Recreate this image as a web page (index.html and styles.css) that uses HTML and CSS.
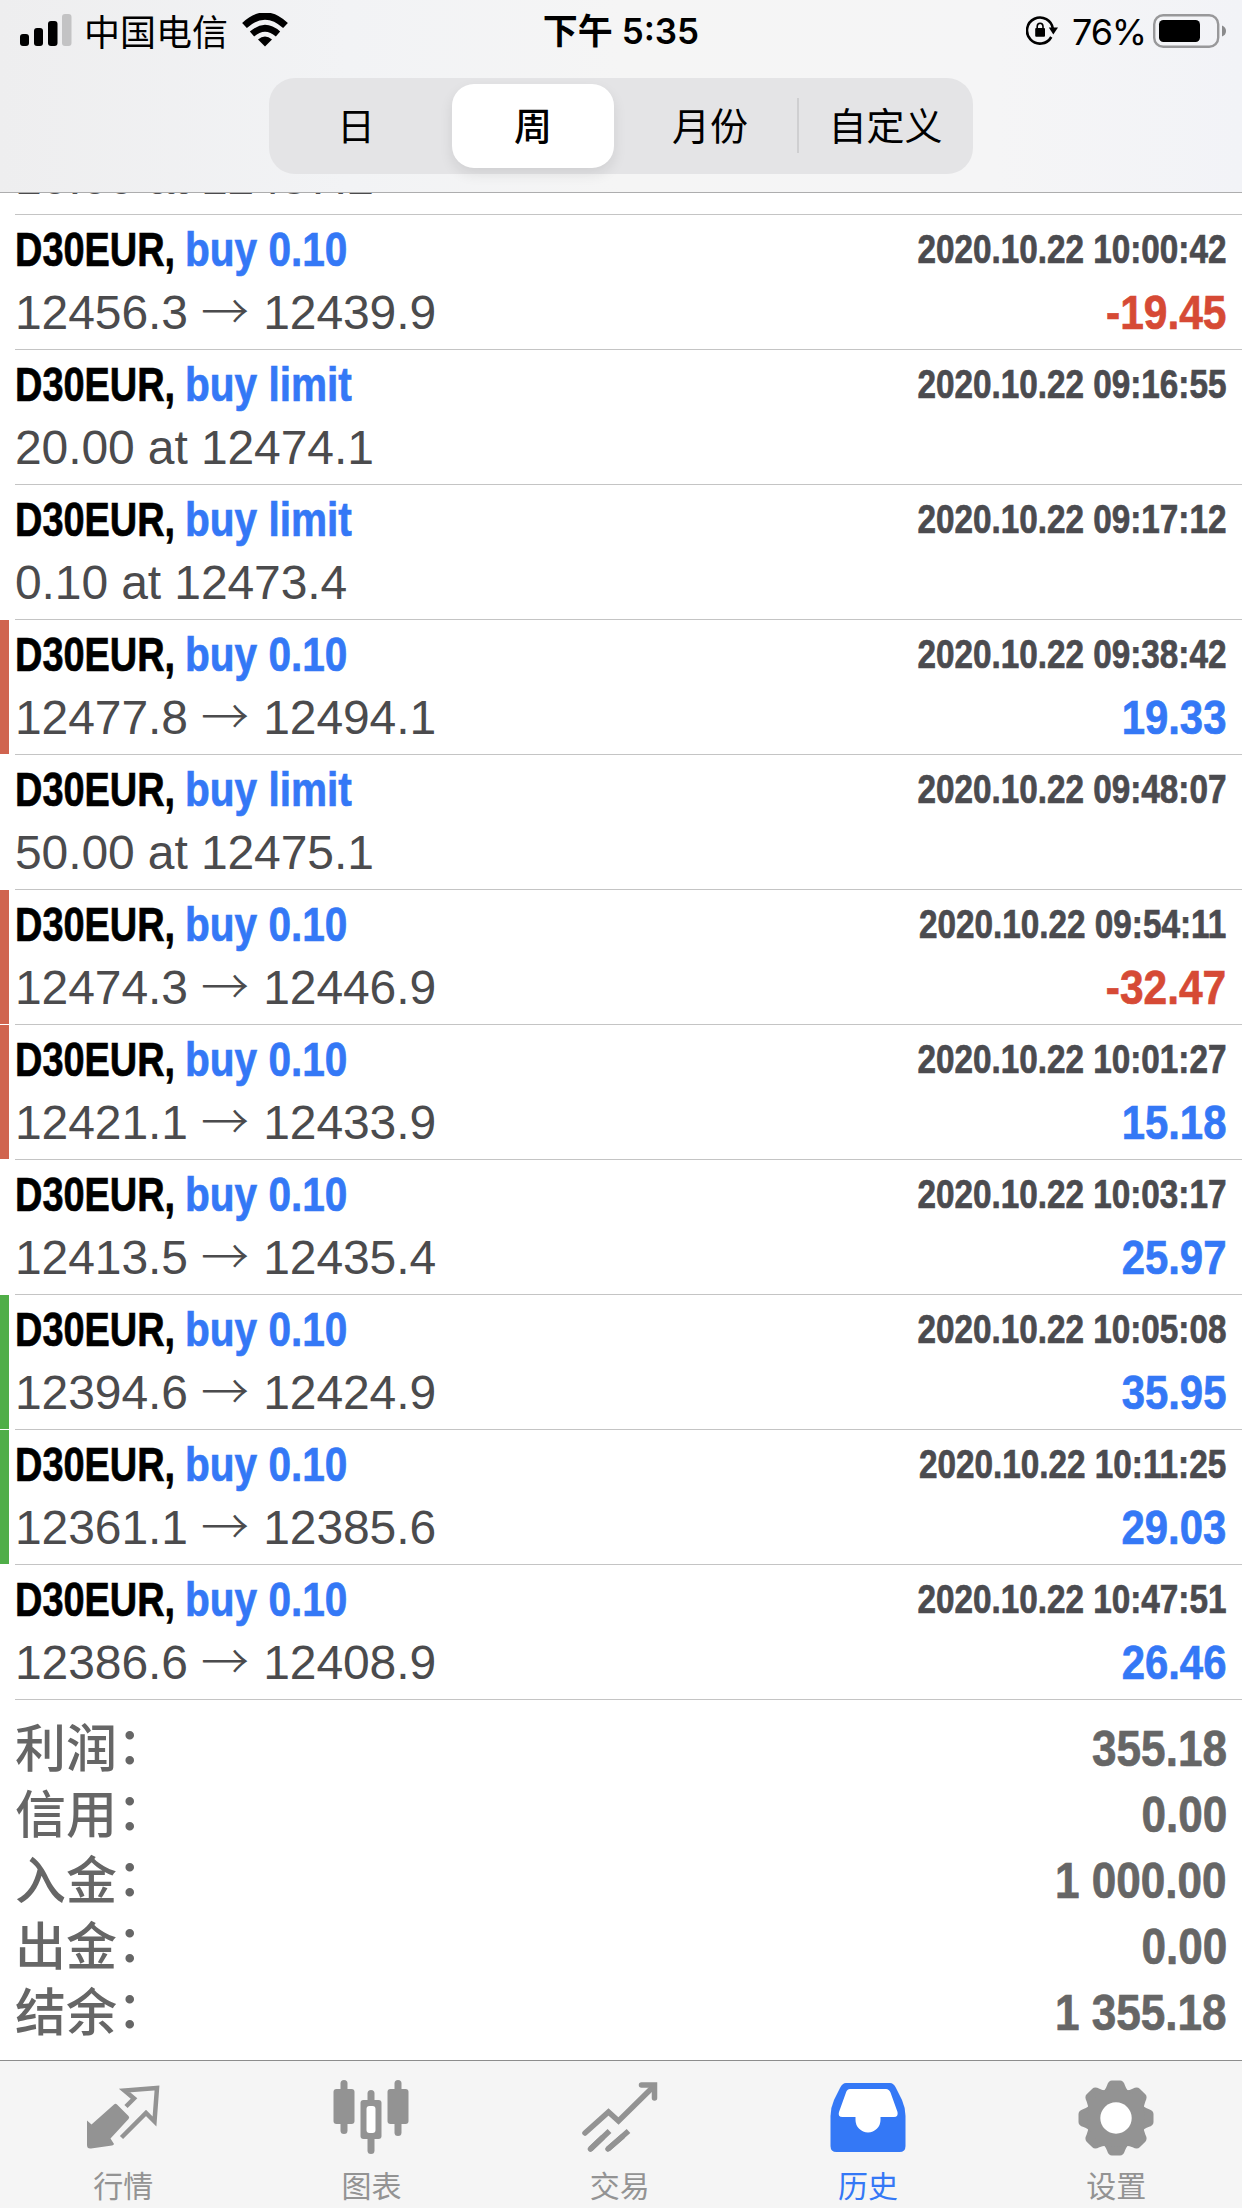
FILE: index.html
```
<!DOCTYPE html>
<html lang="zh-CN">
<head>
  <meta charset="UTF-8" />
  <meta name="viewport" content="width=device-width, initial-scale=1.0"/>
  <title>历史</title>
  <link rel="stylesheet" href="styles.css">
</head>
<body>
  <div class="app">
    <header class="header">
      <div class="status">
        <div class="status-left">
          <svg class="signal" width="52" height="34" viewBox="0 0 52 34">
            <rect x="0" y="20" width="9" height="12" rx="3"/>
            <rect x="14" y="14" width="9" height="18" rx="3"/>
            <rect x="28" y="7" width="9.5" height="25" rx="3"/>
            <rect x="42" y="0" width="9.5" height="32" rx="3" fill="#c3c3c4"/>
          </svg>
          <span class="carrier">中国电信</span>
          <svg class="wifi" width="46" height="34" viewBox="0 0 46 34">
            <path d="M2.5 12.5Q23-6.500 43.500 12.500" fill="none" stroke="#000" stroke-width="7"/>
            <path d="M10 21Q23 9.500 36 21" fill="none" stroke="#000" stroke-width="6.500"/>
            <path d="M16 26.500Q23 20.500 30 26.500L23 33.500Z"/>
          </svg>
        </div>
        <div class="time">下午 5:35</div>
        <div class="status-right">
          <svg class="lock" width="32" height="32" viewBox="0 0 32 32">
            <path d="M25.300 22A13 13 0 1 1 26.900 14" fill="none" stroke="#000" stroke-width="2.600"/>
            <path d="M22.800 12.500H32L27.300 19.500Z"/>
            <rect x="9.200" y="13" width="9.800" height="8.800" rx="1"/>
            <path d="M11.200 13.500V11.500a2.900 3.300 0 0 1 5.800 0v2" fill="none" stroke="#000" stroke-width="1.600"/>
          </svg>
          <span class="percent">76%</span>
          <svg class="battery" width="74" height="34" viewBox="0 0 74 34">
            <rect x="1.200" y="1.200" width="64" height="31.600" rx="9" fill="none" stroke="#98989a" stroke-width="2.400"/>
            <rect x="6" y="6" width="41" height="22" rx="4.500"/>
            <path d="M69 11.500Q73 13 73 17T69 22.500Z" fill="#8a8a8c"/>
          </svg>
        </div>
      </div>
      <nav class="segments">
        <span class="segment">日</span>
        <span class="segment active">周</span>
        <span class="segment">月份</span>
        <span class="segment last">自定义</span>
      </nav>
    </header>

    <main class="content">
      <div class="clipped"><span class="prices">10.00 at 12437.2</span></div>
      <div id="deals"></div>

      <section class="summary">
        <div class="total"><span class="label">利润<span class="colon">：</span></span><span class="sum">355.18</span></div>
        <div class="total"><span class="label">信用<span class="colon">：</span></span><span class="sum">0.00</span></div>
        <div class="total"><span class="label">入金<span class="colon">：</span></span><span class="sum">1 000.00</span></div>
        <div class="total"><span class="label">出金<span class="colon">：</span></span><span class="sum">0.00</span></div>
        <div class="total"><span class="label">结余<span class="colon">：</span></span><span class="sum">1 355.18</span></div>
      </section>
    </main>

    <footer class="tabbar">
      <div class="tab">
        <svg width="76" height="76" viewBox="0 0 76 76">
          <path d="M2 40.500L6.500 44.500L29 24.500Q30.500 23 32 24.500L43.500 36Q45 37.500 43.500 39L25.500 58.500L29 64Q28.500 65 27 65.500L6 68.500Q2 69 2 65Z"/>
          <path d="M41 26.500L49 18.500L39.500 10.500L72 8L69.500 41.500L61 33L36.500 57.500" fill="none" stroke="#939393" stroke-width="4.500" stroke-linejoin="miter"/>
        </svg>
        <span>行情</span>
      </div>
      <div class="tab">
        <svg width="76" height="76" viewBox="0 0 76 76">
          <rect x="7.500" y="0" width="7" height="54" rx="3.500"/>
          <rect x="0.500" y="9" width="21" height="35" rx="3"/>
          <rect x="61.500" y="0" width="7" height="56" rx="3.500"/>
          <rect x="54.500" y="9" width="21" height="35" rx="3"/>
          <rect x="34.500" y="10" width="7" height="64" rx="3.500"/>
          <rect x="27.500" y="20" width="21" height="39" rx="3"/>
          <rect x="33.500" y="26" width="9" height="27" rx="3" fill="#fff"/>
        </svg>
        <span>图表</span>
      </div>
      <div class="tab">
        <svg width="76" height="76" viewBox="0 0 76 76">
          <g fill="none" stroke="#939393" stroke-width="5.500" stroke-linecap="round">
            <path d="M3 53L26.500 32L36.500 41L70 8"/>
            <path d="M59.500 5H72.500V18"/>
            <path d="M8.500 69L27.500 51M26 69L46.500 51" stroke-linecap="butt"/>
            <path d="M8.500 69L20 58M26 69L40 57"/>
          </g>
        </svg>
        <span>交易</span>
      </div>
      <div class="tab active">
        <svg width="76" height="76" viewBox="0 0 76 76">
          <path d="M16 3H60Q63.500 3 66 8L72 20Q75.500 28 75.500 36V66Q75.500 72 69.500 72H6.500Q0.500 72 0.500 66V36Q0.500 28 4 20L10 8Q12.500 3 16 3Z"/>
          <path d="M20 9H56Q59 9 60.500 12.500L67.500 32Q68.500 37 64 37H50.500V40A12.500 12.500 0 0 1 25.500 40V37H12.500Q7.500 37 9 32L16 12.500Q17 9 20 9Z" fill="#fff"/>
        </svg>
        <span>历史</span>
      </div>
      <div class="tab">
        <svg width="76" height="76" viewBox="0 0 76 76">
          <g id="teeth">
            <path id="tooth" d="M23 13Q27.300 10.500 29 5.500Q30.500 0.500 34 0.500H42Q45.500 0.500 47 5.500Q48.700 10.500 53 13Z"/>
            <use href="#tooth" transform="rotate(45 38 38)"/>
            <use href="#tooth" transform="rotate(90 38 38)"/>
            <use href="#tooth" transform="rotate(135 38 38)"/>
          </g>
          <use href="#teeth" transform="rotate(180 38 38)"/>
          <circle cx="38" cy="38" r="29"/>
          <circle cx="38" cy="38" r="15.700" fill="#fff"/>
        </svg>
        <span>设置</span>
      </div>
    </footer>
  </div>

  <script src="script.js"></script>
</body>
</html>
```

FILE: styles.css
```
body {
  margin: 0;
  background: #fff;
  font-family: "Liberation Sans", "Noto Sans CJK SC", sans-serif;
}
.app {
  width: 1242px;
  height: 2208px;
  display: flex;
  flex-direction: column;
  overflow: hidden;
}

/* status bar and period switch */
.header {
  height: 192px;
  box-sizing: content-box;
  border-bottom: 1px solid #adadae;
  background: linear-gradient(90deg, #eeeeef, #f2f3f5 28%, #f5f5f5 50%, #f5f5f6 80%, #f2f3f7);
  font-family: Inter, "Noto Sans CJK SC", sans-serif;
}
.status {
  height: 78px;
  display: grid;
  grid-template-columns: 1fr 1fr 1fr;
}
.status-left,
.status-right {
  display: flex;
  height: 62px;
  align-items: center;
}
.status-left {
  padding-left: 20px;
}
.status-right {
  justify-content: flex-end;
  padding-right: 15px;
}
.signal {
  margin-top: -1px;
}
.carrier {
  font-size: 36px;
  margin: -3px 0 0 12px;
}
.wifi {
  margin-left: 14px;
  margin-top: -3px;
}
.time {
  font-size: 35px;
  font-weight: 600;
  line-height: 62px;
  text-align: center;
}
.percent {
  font-size: 36px;
  letter-spacing: -1.2px;
  margin: 1px 7px 0 14px;
}
.battery {
  margin-top: -1px;
}
.segments {
  width: 704px;
  height: 96px;
  margin-left: 269px;
  box-sizing: border-box;
  padding: 6px 7px;
  border-radius: 26px;
  background: #e4e4e6;
  display: grid;
  grid-template-columns: 160px 194px 160px 176px;
}
.segment {
  font-size: 38px;
  line-height: 84px;
  text-align: center;
}
.segment.active {
  width: 162px;
  justify-self: center;
  border-radius: 22px;
  background: #fff;
  font-weight: 500;
  box-shadow: 0 6px 14px rgba(0,0,0,0.09);
}
.segment.last {
  padding-left: 15px;
  background: linear-gradient(#cfcfd1, #cfcfd1) no-repeat 7px 14px / 2px 55px;
}

/* list of deals */
.content {
  flex: 1;
}
.clipped {
  height: 21px;
  margin-left: 15px;
  border-bottom: 1px solid #c4c4c4;
  overflow: hidden;
  display: flex;
  align-items: flex-start;
}
.clipped .prices {
  margin-top: -44px;
}
.row {
  position: relative;
  height: 135px;
  box-sizing: border-box;
  padding: 0 16px 0 15px;
  display: grid;
  grid-template-columns: 1fr auto;
  grid-template-rows: 69px 65px;
}
.row::after {
  content: "";
  position: absolute;
  left: 15px;
  right: 0;
  bottom: 0;
  height: 1px;
  background: #c4c4c4;
}
.marker {
  position: absolute;
  left: 0;
  top: 0;
  width: 9px;
  height: 134px;
}
.marker.red {
  background: #d0644f;
}
.marker.green {
  background: #50ae48;
}

/* condensed bold */
.name,
.side,
.date,
.profit,
.sum {
  font-weight: bold;
  white-space: nowrap;
  transform-origin: left center;
  -webkit-text-stroke: 0.7px currentColor;
}
.symbol {
  display: flex;
  font-size: 48px;
  line-height: 70px;
}
.name {
  width: 170px;
  transform: scaleX(0.79);
}
.side {
  transform: scaleX(0.845);
}
.side,
.profit {
  color: #3478f6;
}
.date,
.profit,
.sum {
  transform-origin: right center;
  text-align: right;
}
.date {
  font-size: 40px;
  line-height: 68px;
  color: #4b4b4f;
  transform: scaleX(0.832);
}
.profit {
  font-size: 48px;
  line-height: 58px;
  transform: scaleX(0.872);
}
.profit.loss {
  color: #d64a35;
  transform: scaleX(0.885);
}
.prices {
  font-size: 48px;
  line-height: 57px;
  letter-spacing: -0.1px;
  color: #4b4b4d;
  white-space: nowrap;
}
.arrow {
  font-family: "Noto Sans CJK SC", sans-serif;
  font-weight: 300;
  line-height: 0;
  margin: 0 1px 0 0;
}

/* totals */
.summary {
  padding: 16px 15px 0;
}
.total {
  height: 66px;
  display: flex;
  justify-content: space-between;
  color: #666;
}
.label {
  font-family: "Noto Sans CJK SC", sans-serif;
  font-size: 51px;
  font-weight: 500;
  line-height: 59px;
}
.colon {
  display: inline-block;
  transform: translateY(-3px);
}
.sum {
  font-size: 50px;
  line-height: 66px;
  transform: scaleX(0.882);
}

/* bottom tabs */
.tabbar {
  height: 147px;
  border-top: 1px solid #8d8d8d;
  background: #f5f5f5;
  display: flex;
}
.tab {
  width: 248.3px;
  flex: none;
  padding-top: 19px;
  display: flex;
  flex-direction: column;
  align-items: center;
  color: #939393;
  fill: #939393;
  font-family: "Noto Sans CJK SC", sans-serif;
  font-size: 30px;
  line-height: 44px;
}
.tab:first-child {
  margin-left: -1px;
}
.tab span {
  margin-top: 6px;
}
.tab.active {
  color: #3478f6;
  fill: #3478f6;
}
```

FILE: script.js
```
const deals = [
  { type: "buy 0.10", from: "12456.3", to: "12439.9", date: "2020.10.22 10:00:42", profit: "-19.45" },
  { type: "buy limit", text: "20.00 at 12474.1", date: "2020.10.22 09:16:55" },
  { type: "buy limit", text: "0.10 at 12473.4", date: "2020.10.22 09:17:12" },
  { type: "buy 0.10", from: "12477.8", to: "12494.1", date: "2020.10.22 09:38:42", profit: "19.33", marker: "red" },
  { type: "buy limit", text: "50.00 at 12475.1", date: "2020.10.22 09:48:07" },
  { type: "buy 0.10", from: "12474.3", to: "12446.9", date: "2020.10.22 09:54:11", profit: "-32.47", marker: "red" },
  { type: "buy 0.10", from: "12421.1", to: "12433.9", date: "2020.10.22 10:01:27", profit: "15.18", marker: "red" },
  { type: "buy 0.10", from: "12413.5", to: "12435.4", date: "2020.10.22 10:03:17", profit: "25.97" },
  { type: "buy 0.10", from: "12394.6", to: "12424.9", date: "2020.10.22 10:05:08", profit: "35.95", marker: "green" },
  { type: "buy 0.10", from: "12361.1", to: "12385.6", date: "2020.10.22 10:11:25", profit: "29.03", marker: "green" },
  { type: "buy 0.10", from: "12386.6", to: "12408.9", date: "2020.10.22 10:47:51", profit: "26.46" }
];

document.getElementById("deals").innerHTML = deals.map(deal => {
  const prices = deal.text || `${deal.from} <span class="arrow">→</span> ${deal.to}`;
  const loss = deal.profit && deal.profit.startsWith("-") ? " loss" : "";
  return `
    <div class="row">
      ${deal.marker ? `<i class="marker ${deal.marker}"></i>` : ""}
      <div class="symbol"><span class="name">D30EUR,</span><span class="side">${deal.type}</span></div>
      <div class="date">${deal.date}</div>
      <div class="prices">${prices}</div>
      <div class="profit${loss}">${deal.profit || ""}</div>
    </div>`;
}).join("");
```
